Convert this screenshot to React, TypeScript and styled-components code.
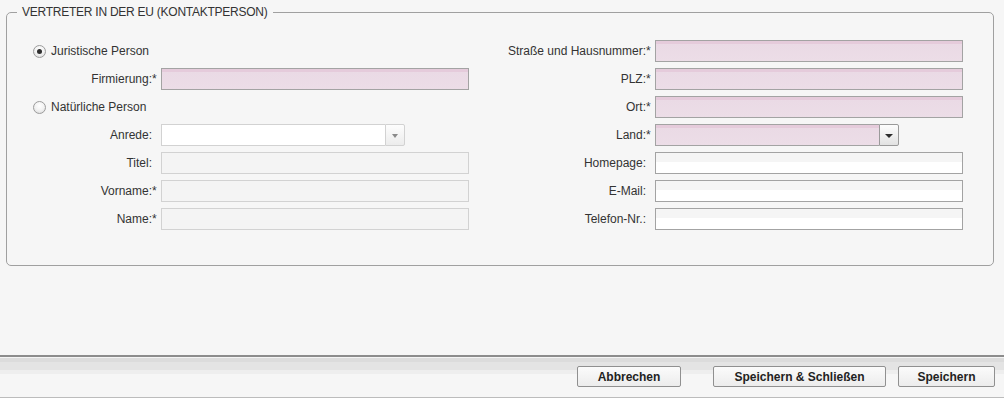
import React from 'react'
import styled, { createGlobalStyle, css } from 'styled-components'

const GlobalStyle = createGlobalStyle`
  html, body {
    margin: 0;
    padding: 0;
    background: #f6f6f6;
  }
  body {
    font-family: 'Liberation Sans', Arial, sans-serif;
    font-size: 12px;
    color: #333;
  }
`

const Page = styled.div`
  height: 398px;
  display: flex;
  flex-direction: column;
`
const Content = styled.div`
  flex: 1;
  padding: 5px 10px 0 6px;
`
const Fieldset = styled.fieldset`
  margin: 0;
  padding: 21px 10px 35px 10px;
  border: 1px solid #a0a0a0;
  border-radius: 5px;
  min-width: 0;
`
const Legend = styled.legend`
  padding: 0 5px;
  margin: 0;
  font-size: 12px;
  line-height: 14px;
  letter-spacing: -0.25px;
  color: #333;
`
const Columns = styled.div`
  display: flex;
  gap: 27px;
`
const Column = styled.div<{ $label: number }>`
  display: grid;
  grid-template-columns: ${(p) => p.$label}px 9px 308px;
  grid-auto-rows: 22px;
  row-gap: 6px;
  align-items: center;
`
const Label = styled.div`
  text-align: right;
  white-space: nowrap;
  color: #333;
`
const Star = styled.div`
  color: #333;
`
const RadioRow = styled.label`
  grid-column: 1 / -1;
  display: flex;
  align-items: center;
  gap: 5px;
  padding-left: 16px;
  color: #333;
`
const RadioDot = styled.span<{ $checked?: boolean }>`
  width: 13px;
  height: 13px;
  box-sizing: border-box;
  border-radius: 50%;
  border: 1px solid #9c9c9c;
  background: radial-gradient(circle at 50% 35%, #ffffff 0%, #f2f2f2 50%, #d6d6d6 100%);
  display: flex;
  align-items: center;
  justify-content: center;
  &::after {
    content: '';
    width: 5px;
    height: 5px;
    border-radius: 50%;
    background: ${(p) => (p.$checked ? '#2e2e2e' : 'transparent')};
  }
`

type Variant = 'required' | 'disabled' | 'normal'

const fieldLook = {
  required: css`
    border: 1px solid #a3a3a3;
    background: linear-gradient(to bottom, #e5cbdb 0, #e5cbdb 3px, #eadae5 3px, #ecdde7 100%);
  `,
  disabled: css`
    border: 1px solid #d2d2d2;
    background: #f4f4f4;
  `,
  normal: css`
    border: 1px solid #a3a3a3;
    background: linear-gradient(to bottom, #f5f5f5 0, #f5f5f5 9px, #ffffff 9px);
  `,
  light: css`
    border: 1px solid #d2d2d2;
    background: #ffffff;
  `,
}

const Input = styled.input<{ $variant: Variant }>`
  box-sizing: border-box;
  width: 308px;
  height: 22px;
  margin: 0;
  padding: 0 4px;
  font: inherit;
  outline: none;
  ${(p) => fieldLook[p.$variant]}
`
const Combo = styled.div`
  display: flex;
  width: 244px;
  height: 22px;
`
const ComboField = styled.div<{ $look: 'required' | 'light' }>`
  flex: 1;
  box-sizing: border-box;
  ${(p) => fieldLook[p.$look]}
  border-right: none;
`
const Trigger = styled.div<{ $dark?: boolean }>`
  width: 20px;
  box-sizing: border-box;
  border: 1px solid ${(p) => (p.$dark ? '#9a9a9a' : '#d2d2d2')};
  border-radius: 0 2px 2px 0;
  background: linear-gradient(to bottom, #fdfdfd, ${(p) => (p.$dark ? '#e2e2e2' : '#ececec')});
  display: flex;
  align-items: center;
  justify-content: center;
  &::after {
    content: '';
    width: 0;
    height: 0;
    border-left: ${(p) => (p.$dark ? 4 : 3.5)}px solid transparent;
    border-right: ${(p) => (p.$dark ? 4 : 3.5)}px solid transparent;
    border-top: 4px solid ${(p) => (p.$dark ? '#2c2c2c' : '#8a8a8a')};
    margin-top: 1px;
  }
`

const Footer = styled.div`
  height: 43px;
  box-sizing: border-box;
  border-top: 2px solid #8c8c8c;
  border-bottom: 1px solid #bcbcbc;
  background: linear-gradient(
    to bottom,
    #f4f4f4 0,
    #f4f4f4 1px,
    #dcdcdc 1px,
    #dcdcdc 5px,
    #e4e4e4 5px,
    #e4e4e4 13px,
    #eeeeee 13px,
    #eeeeee 17px,
    #f6f6f6 17px
  );
  display: flex;
  justify-content: flex-end;
  align-items: flex-start;
  padding: 9px 9px 0 0;
  gap: 12px;
`
const Button = styled.button<{ $w: number; $after?: number }>`
  width: ${(p) => p.$w}px;
  height: 21px;
  margin-right: ${(p) => p.$after ?? 0}px;
  box-sizing: border-box;
  border: 1px solid #909090;
  border-radius: 2px;
  background: linear-gradient(to bottom, #fbfbfb, #ececec);
  font-family: 'Liberation Sans', Arial, sans-serif;
  font-size: 12px;
  font-weight: bold;
  color: #222;
  padding: 0;
  cursor: pointer;
`

const Field = ({ label, req, children }: { label: string; req?: boolean; children: React.ReactNode }) => (
  <>
    <Label>{label}</Label>
    <Star>{req ? '*' : ''}</Star>
    {children}
  </>
)

const App = () => {
  return (
    <>
      <GlobalStyle />
      <Page>
        <Content>
          <Fieldset>
            <Legend>VERTRETER IN DER EU (KONTAKTPERSON)</Legend>
            <Columns>
              <Column $label={135}>
                <RadioRow>
                  <RadioDot $checked />
                  Juristische Person
                </RadioRow>
                <Field label="Firmierung:" req>
                  <Input $variant="required" readOnly />
                </Field>
                <RadioRow>
                  <RadioDot />
                  Natürliche Person
                </RadioRow>
                <Field label="Anrede:">
                  <Combo>
                    <ComboField $look="light" />
                    <Trigger />
                  </Combo>
                </Field>
                <Field label="Titel:">
                  <Input $variant="disabled" disabled />
                </Field>
                <Field label="Vorname:" req>
                  <Input $variant="disabled" disabled />
                </Field>
                <Field label="Name:" req>
                  <Input $variant="disabled" disabled />
                </Field>
              </Column>
              <Column $label={150}>
                <Field label="Straße und Hausnummer:" req>
                  <Input $variant="required" readOnly />
                </Field>
                <Field label="PLZ:" req>
                  <Input $variant="required" readOnly />
                </Field>
                <Field label="Ort:" req>
                  <Input $variant="required" readOnly />
                </Field>
                <Field label="Land:" req>
                  <Combo>
                    <ComboField $look="required" />
                    <Trigger $dark />
                  </Combo>
                </Field>
                <Field label="Homepage:">
                  <Input $variant="normal" readOnly />
                </Field>
                <Field label="E-Mail:">
                  <Input $variant="normal" readOnly />
                </Field>
                <Field label="Telefon-Nr.:">
                  <Input $variant="normal" readOnly />
                </Field>
              </Column>
            </Columns>
          </Fieldset>
        </Content>
        <Footer>
          <Button $w={104} $after={20}>Abbrechen</Button>
          <Button $w={173}>Speichern &amp; Schließen</Button>
          <Button $w={97}>Speichern</Button>
        </Footer>
      </Page>
    </>
  )
}

export default App
